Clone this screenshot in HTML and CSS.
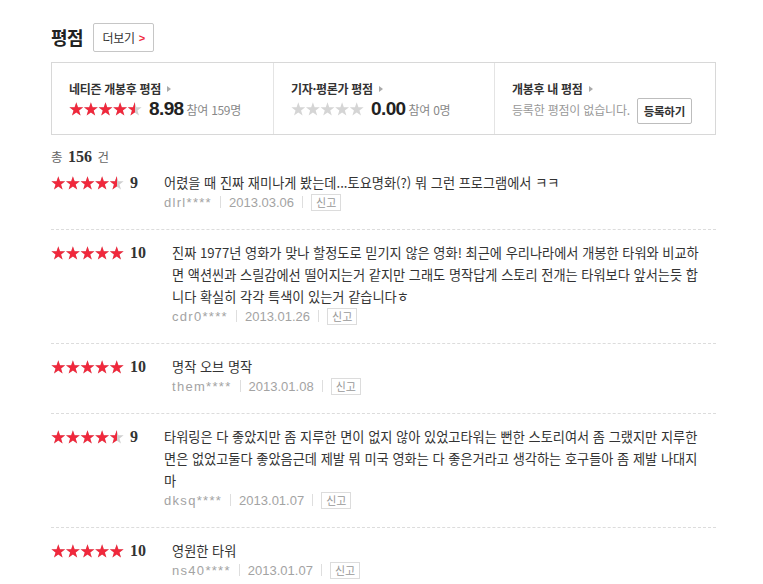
FILE: index.html
```html
<!DOCTYPE html>
<html lang="ko">
<head>
<meta charset="utf-8">
<title>평점</title>
<link rel="stylesheet" href="styles.css">
</head>
<body>
<svg class="defs" width="0" height="0" aria-hidden="true">
  <defs>
    <polygon id="star" points="7.3,0.2 9.01,5.15 14.24,5.24 10.06,8.4 11.59,13.41 7.3,10.4 3.01,13.41 4.54,8.4 0.36,5.24 5.59,5.15"/>
    <g id="stars5">
      <use href="#star" x="0"/>
      <use href="#star" x="14.6"/>
      <use href="#star" x="29.2"/>
      <use href="#star" x="43.8"/>
      <use href="#star" x="58.4"/>
    </g>
  </defs>
</svg>

<div class="wrap">
  <div class="head">
    <h2 class="title">평점</h2>
    <a class="more" href="#">더보기 <span class="chev">&gt;</span></a>
  </div>

  <div class="summary">
    <div class="col">
      <div class="col-title">네티즌 개봉후 평점 <i class="tri"></i></div>
      <div class="col-body">
        <span class="stars"><svg class="s-bg" viewBox="0 0 73 14"><use href="#stars5"/></svg><span class="s-fill" style="width:89.8%"><svg viewBox="0 0 73 14"><use href="#stars5"/></svg></span></span>
        <strong class="avg">8.98</strong>
        <span class="cnt">참여 159명</span>
      </div>
    </div>
    <div class="col">
      <div class="col-title">기자·평론가 평점 <i class="tri"></i></div>
      <div class="col-body">
        <span class="stars"><svg class="s-bg light" viewBox="0 0 73 14"><use href="#stars5"/></svg></span>
        <strong class="avg">0.00</strong>
        <span class="cnt">참여 0명</span>
      </div>
    </div>
    <div class="col">
      <div class="col-title">개봉후 내 평점 <i class="tri"></i></div>
      <div class="col-body">
        <span class="none">등록한 평점이 없습니다.</span>
        <button class="reg" type="button">등록하기</button>
      </div>
    </div>
  </div>

  <p class="total">총 <strong>156</strong> 건</p>

  <ul class="list">
    <li class="row">
      <div class="score"><span class="stars"><svg class="s-bg" viewBox="0 0 73 14"><use href="#stars5"/></svg><span class="s-fill" style="width:90%"><svg viewBox="0 0 73 14"><use href="#stars5"/></svg></span></span><em class="num">9</em></div>
      <div class="body">
        <p class="txt">어렸을 때 진짜 재미나게 봤는데...토요명화(?) 뭐 그런 프로그램에서 ㅋㅋ</p>
        <div class="meta"><span class="uid">dlrl****</span><i class="bar"></i><span class="date">2013.03.06</span><i class="bar"></i><a class="report" href="#">신고</a></div>
      </div>
    </li>
    <li class="row">
      <div class="score"><span class="stars"><svg class="s-bg" viewBox="0 0 73 14"><use href="#stars5"/></svg><span class="s-fill" style="width:100%"><svg viewBox="0 0 73 14"><use href="#stars5"/></svg></span></span><em class="num">10</em></div>
      <div class="body">
        <p class="txt">진짜 1977년 영화가 맞나 할정도로 믿기지 않은 영화! 최근에 우리나라에서 개봉한 타워와 비교하면 액션씬과 스릴감에선 떨어지는거 같지만 그래도 명작답게 스토리 전개는 타워보다 앞서는듯 합니다 확실히 각각 특색이 있는거 같습니다ㅎ</p>
        <div class="meta"><span class="uid">cdr0****</span><i class="bar"></i><span class="date">2013.01.26</span><i class="bar"></i><a class="report" href="#">신고</a></div>
      </div>
    </li>
    <li class="row">
      <div class="score"><span class="stars"><svg class="s-bg" viewBox="0 0 73 14"><use href="#stars5"/></svg><span class="s-fill" style="width:100%"><svg viewBox="0 0 73 14"><use href="#stars5"/></svg></span></span><em class="num">10</em></div>
      <div class="body">
        <p class="txt">명작 오브 명작</p>
        <div class="meta"><span class="uid">them****</span><i class="bar"></i><span class="date">2013.01.08</span><i class="bar"></i><a class="report" href="#">신고</a></div>
      </div>
    </li>
    <li class="row">
      <div class="score"><span class="stars"><svg class="s-bg" viewBox="0 0 73 14"><use href="#stars5"/></svg><span class="s-fill" style="width:90%"><svg viewBox="0 0 73 14"><use href="#stars5"/></svg></span></span><em class="num">9</em></div>
      <div class="body">
        <p class="txt">타워링은 다 좋았지만 좀 지루한 면이 없지 않아 있었고타워는 뻔한 스토리여서 좀 그랬지만 지루한 면은 없었고둘다 좋았음근데 제발 뭐 미국 영화는 다 좋은거라고 생각하는 호구들아 좀 제발 나대지 마</p>
        <div class="meta"><span class="uid">dksq****</span><i class="bar"></i><span class="date">2013.01.07</span><i class="bar"></i><a class="report" href="#">신고</a></div>
      </div>
    </li>
    <li class="row">
      <div class="score"><span class="stars"><svg class="s-bg" viewBox="0 0 73 14"><use href="#stars5"/></svg><span class="s-fill" style="width:100%"><svg viewBox="0 0 73 14"><use href="#stars5"/></svg></span></span><em class="num">10</em></div>
      <div class="body">
        <p class="txt">영원한 타워</p>
        <div class="meta"><span class="uid">ns40****</span><i class="bar"></i><span class="date">2013.01.07</span><i class="bar"></i><a class="report" href="#">신고</a></div>
      </div>
    </li>
  </ul>
</div>
</body>
</html>
```

FILE: styles.css
```css
* { box-sizing: border-box; }
html, body { margin: 0; padding: 0; background: #fff; }
body {
  font-family: "Noto Sans CJK KR", "Noto Sans", sans-serif;
  color: #333;
  overflow: hidden;
}
.defs { position: absolute; width: 0; height: 0; }
.wrap { width: 665px; margin-left: 51px; }

.head { display: flex; align-items: center; gap: 10px; margin-top: 23px; height: 29px; }
.title { margin: 0; font-size: 18px; font-weight: 700; color: #222; letter-spacing: -0.5px; line-height: 29px; }
.more {
  display: flex; align-items: center; justify-content: center; gap: 4px;
  width: 61px; height: 29px; border: 1px solid #c6c6c6; border-radius: 2px;
  font-size: 12px; color: #333; text-decoration: none; letter-spacing: -0.3px;
}
.chev { color: #f0283c; font-family: "Liberation Sans", sans-serif; font-weight: 700; font-size: 11px; }

.summary {
  display: grid; grid-template-columns: 221px 221px 1fr;
  margin-top: 10px; height: 73px; border: 1px solid #d8d8d8;
}
.col { padding: 17px 0 0 17px; }
.col + .col { border-left: 1px solid #e4e4e4; }
.col-title { font-size: 12px; font-weight: 700; line-height: 18px; color: #333; display: flex; align-items: center; gap: 6px; letter-spacing: -0.3px; }
.tri { display: inline-block; width: 0; height: 0; border-left: 4px solid #aaa; border-top: 3.5px solid transparent; border-bottom: 3.5px solid transparent; }
.col-body { display: flex; align-items: center; height: 22px; margin-top: 0; }
.col-body .stars { margin-right: 7px; }
.avg { font-family: "Liberation Sans", sans-serif; font-size: 19px; font-weight: 700; color: #222; letter-spacing: -0.6px; margin-right: 3px; }
.cnt { font-size: 12px; color: #888; letter-spacing: -0.3px; }
.none { font-size: 12px; color: #999; letter-spacing: -0.2px; margin-right: 7px; }
.reg {
  height: 26px; width: 55px; padding: 0; margin-top: 3px;
  font-family: inherit; font-size: 11.5px; font-weight: 700; color: #333;
  background: #fff; border: 1px solid #bdbdbd; border-radius: 2px; letter-spacing: -0.3px;
}

.stars { position: relative; display: inline-block; width: 73px; height: 14px; flex: none; }
.stars svg { display: block; width: 73px; height: 14px; }
.s-bg { fill: #cfcfcf; }
.s-bg.light { fill: #d5d5d5; }
.s-fill { position: absolute; left: 0; top: 0; height: 14px; overflow: hidden; fill: #f0283c; }

.total { margin: 12px 0 0; line-height: 20px; font-size: 12.5px; color: #666; }
.total strong { font-family: "Liberation Serif", serif; font-size: 16px; color: #333; margin: 0 2px; }

.list { list-style: none; margin: 0; padding: 0; }
.row { display: flex; align-items: flex-start; padding: 12px 0 19px; border-bottom: 1px dashed #dcdcdc; }
.row:first-child { padding-top: 5px; }
.row:last-child { border-bottom: 0; }
.score { display: flex; align-items: center; height: 22px; flex: none; }
.num { font-style: normal; font-family: "Liberation Serif", serif; font-weight: 700; font-size: 16px; color: #333; margin-left: 6px; margin-right: 26px; }
.body { flex: 1; min-width: 0; padding-right: 11px; }
.txt { margin: 0; font-size: 13.2px; line-height: 22px; color: #333; }
.meta { display: flex; align-items: center; height: 16px; font-family: "Liberation Sans", sans-serif; font-size: 13px; color: #a3a3a3; }
.uid { letter-spacing: 1.3px; }
.bar { display: inline-block; width: 1px; height: 12px; background: #dedede; margin: 0 8px; }
.report {
  display: inline-flex; align-items: center; height: 17px; padding: 0 4px;
  border: 1px solid #dcdcdc; font-family: "Noto Sans CJK KR", sans-serif; font-size: 11px;
  color: #999; text-decoration: none;
}
```
